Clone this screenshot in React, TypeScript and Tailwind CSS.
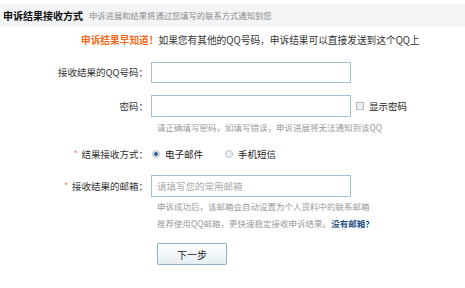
import React from 'react';

const FONT = { fontFamily: '"Noto Sans CJK SC", "Noto Sans", sans-serif' };

function Label({ text, required }: { text: string; required?: boolean }) {
  return (
    <div className="flex items-center justify-end text-[9.5px] text-[#333]">
      {required && <span className="mr-[4px] text-[8px] text-[#e5554f]">*</span>}
      {text}
    </div>
  );
}

function Radio({ checked, label }: { checked?: boolean; label: string }) {
  return (
    <label className="flex items-center gap-[5px]">
      <span className="flex h-[8px] w-[8px] items-center justify-center rounded-full border border-[#b9c4cc] bg-[#eef1f3]">
        {checked && <span className="h-[4px] w-[4px] rounded-full bg-[#2c5d8f]" />}
      </span>
      <span>{label}</span>
    </label>
  );
}

export default function App() {
  return (
    <div className="h-[288px] w-[465px] bg-white pt-[4px] text-[#333]" style={FONT}>
      {/* Title bar */}
      <div className="flex h-[23px] items-center gap-[6px] bg-[#f2f4f5] px-[3px]">
        <span className="text-[10px] font-bold text-[#111]">申诉结果接收方式</span>
        <span className="text-[8.3px] text-[#8c8c8c]">申诉进展和结果将通过您填写的联系方式通知到您</span>
      </div>

      {/* Notice */}
      <div className="mt-[6px] pl-[81px] text-[9.7px] leading-[14px]">
        <span className="font-bold text-[#f26b1d]">申诉结果早知道！</span>
        如果您有其他的QQ号码，申诉结果可以直接发送到这个QQ上
      </div>

      {/* Form */}
      <div className="mt-[15px] grid grid-cols-[148px_1fr] gap-x-[3px]">
        <Label text="接收结果的QQ号码：" />
        <div>
          <input className="block h-[21px] w-[200px] border border-[#9fc3d2] bg-white outline-none" />
        </div>

        <div className="col-span-2 h-[12px]" />

        <Label text="密码：" />
        <div className="flex items-center gap-[5px]">
          <input
            type="password"
            className="block h-[22px] w-[200px] border border-[#9fc3d2] bg-white outline-none"
          />
          <span className="h-[8px] w-[8px] border border-[#b5bcc2] bg-[#eceff1]" />
          <span className="text-[9.5px] text-[#222]">显示密码</span>
        </div>

        <div />
        <div className="pl-[6px] pt-[4px] text-[8.5px] leading-[12px] text-[#9a9a9a]">
          请正确填写密码，如填写错误，申诉进展将无法通知到该QQ
        </div>

        <div className="col-span-2 h-[14px]" />

        <Label text="结果接收方式：" required />
        <div className="flex items-center gap-[22px] pl-[1px] text-[9.5px] text-[#222]">
          <Radio checked label="电子邮件" />
          <Radio label="手机短信" />
        </div>

        <div className="col-span-2 h-[14px]" />

        <Label text="接收结果的邮箱：" required />
        <div>
          <input
            placeholder="请填写您的常用邮箱"
            className="block h-[22px] w-[200px] border border-[#9fc3d2] bg-white px-[5px] text-[9.5px] outline-none placeholder:text-[#aaa]"
          />
        </div>

        <div />
        <div className="pl-[6px] pt-[1px] text-[8.5px] leading-[17px] text-[#9a9a9a]">
          <div>申诉成功后，该邮箱会自动设置为个人资料中的联系邮箱</div>
          <div>
            推荐使用QQ邮箱，更快速稳定接收申诉结果。
            <a className="font-bold text-[#1d4f86]">没有邮箱？</a>
          </div>
        </div>

        <div />
        <div className="pl-[6px] pt-[11px]">
          <button className="flex h-[22px] w-[70px] items-center justify-center rounded-[2px] border border-[#8fb2c8] bg-gradient-to-b from-white to-[#e6edf2] text-[10px] text-[#222]">
            下一步
          </button>
        </div>
      </div>
    </div>
  );
}
